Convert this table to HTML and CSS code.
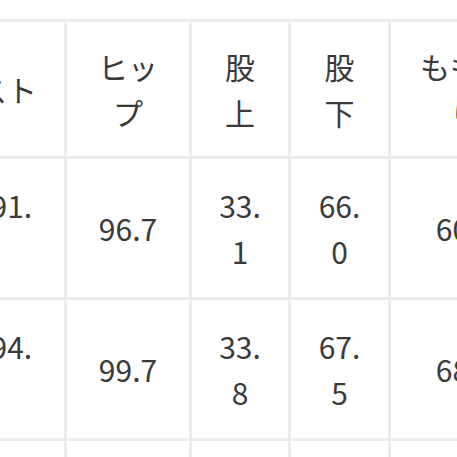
FILE: index.html
```html
<!DOCTYPE html>
<html lang="ja">
<head>
<meta charset="utf-8">
<title>サイズ表</title>
<link rel="stylesheet" href="styles.css">
</head>
<body>
<div class="sizes">
  <div class="cell head edge">ウエスト</div>
  <div class="cell head">ヒップ</div>
  <div class="cell head">股上</div>
  <div class="cell head">股下</div>
  <div class="cell head">もも周り</div>

  <div class="cell edge">88.0-91.5</div>
  <div class="cell">96.7</div>
  <div class="cell">33.1</div>
  <div class="cell">66.0</div>
  <div class="cell">60.5</div>

  <div class="cell edge">91.0-94.5</div>
  <div class="cell">99.7</div>
  <div class="cell">33.8</div>
  <div class="cell">67.5</div>
  <div class="cell">68.0</div>

  <div class="cell edge">94.0-97.5</div>
  <div class="cell">102.7</div>
  <div class="cell">34.5</div>
  <div class="cell">69.0</div>
  <div class="cell">70.5</div>
</div>
</body>
</html>
```

FILE: styles.css
```css
html, body {
  margin: 0;
  padding: 0;
  overflow: hidden;
  background: #ffffff;
}

body {
  font-family: "Noto Sans CJK JP", "Noto Sans", sans-serif;
  color: #3a3a3a;
}

.sizes {
  display: grid;
  grid-template-columns: 166px 122px 96px 97px 148px;
  gap: 3px;
  padding: 3px;
  width: max-content;
  margin: 19px 0 0 -105px;
  background: #ececec;
}

.cell {
  display: flex;
  align-items: center;
  justify-content: center;
  text-align: center;
  padding: 23px 22px;
  background: #ffffff;
  font-size: 30px;
  font-weight: 400;
  line-height: 46px;
  word-break: break-all;
}

.cell.head {
  padding-top: 21px;
  padding-bottom: 21px;
}

.cell.edge {
  padding-left: 18px;
  padding-right: 26px;
}
```
